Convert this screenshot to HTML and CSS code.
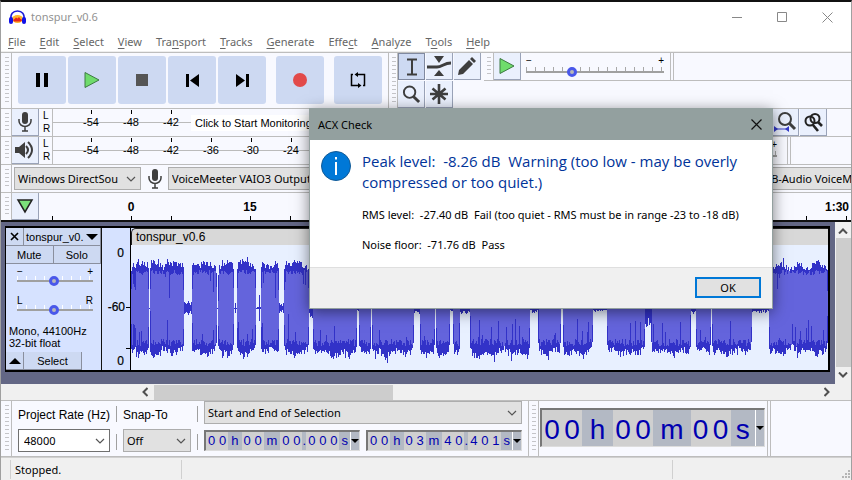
FILE: index.html
```
<!DOCTYPE html>
<html lang="en">
<head>
<meta charset="utf-8">
<title>tonspur_v0.6</title>
<link rel="stylesheet" href="styles.css">
</head>
<body>
<svg class="defs" aria-hidden="true">
  <symbol id="chevron" viewBox="0 0 10 6"><path d="M1 1l4 4 4-4" fill="none" stroke="#555" stroke-width="1.2"/></symbol>
  <symbol id="mic" viewBox="0 0 16 20"><rect x="5" y="0" width="6" height="12" rx="3" fill="#3e3e3e"/><path d="M2 7v2a6 5.500 0 0 0 12 0V7M8 14.500V19M5 19h6" fill="none" stroke="#3e3e3e" stroke-width="1.500"/></symbol>
  <symbol id="lens" viewBox="0 0 20 20"><circle cx="8" cy="7.500" r="6" fill="none" stroke="#3e3e3e" stroke-width="2"/><path d="M12 12l6 6" stroke="#3e3e3e" stroke-width="3"/></symbol>
  <symbol id="play" viewBox="0 0 16 18"><path d="M1 1.500v15L15 9z" fill="#6fdc6c" stroke="#3d7a42"/></symbol>
</svg>
<div class="window">
  <header class="titlebar">
    <svg class="logo" width="17" height="15" viewBox="0 0 17 15"><ellipse cx="8.500" cy="9" rx="5.500" ry="4" fill="#ffb52a"/><path d="M4 10l1.500-1 1.500-1.500 1.500 1 1.500-1.500 1.500 2 2 1-2 1.500H5z" fill="#e8261c"/><path d="M2 10C1 4 4 1 8.500 1S16 4 15 10" fill="none" stroke="#1b1bd8" stroke-width="1.500"/><rect x="0" y="7" width="4" height="7" rx="2" fill="#1111e8"/><rect x="13" y="7" width="4" height="7" rx="2" fill="#1111e8"/></svg>
    <h1>tonspur_v0.6</h1>
    <button class="caption" aria-label="Minimize"><svg width="11" height="11"><path d="M0 5.500h10" stroke="#888"/></svg></button>
    <button class="caption" aria-label="Maximize"><svg width="11" height="11"><path d="M.5.5h9v9h-9z" fill="none" stroke="#888"/></svg></button>
    <button class="caption" aria-label="Close"><svg width="11" height="11"><path d="M.5.5l10 10M10.500.5l-10 10" stroke="#888"/></svg></button>
  </header>
  <nav class="menu">
    <a href="#"><u>F</u>ile</a><a href="#"><u>E</u>dit</a><a href="#"><u>S</u>elect</a><a href="#"><u>V</u>iew</a><a href="#">Tra<u>n</u>sport</a><a href="#"><u>T</u>racks</a><a href="#"><u>G</u>enerate</a><a href="#">Effe<u>c</u>t</a><a href="#"><u>A</u>nalyze</a><a href="#">T<u>o</u>ols</a><a href="#"><u>H</u>elp</a>
  </nav>

  <section class="bar bar-top">
    <i class="grip"></i>
    <div class="transport">
      <button aria-label="Pause"><svg width="12" height="14"><path d="M0 0h4v14H0zM8 0h4v14H8z"/></svg></button>
      <button aria-label="Play"><svg width="16" height="18"><use href="#play"/></svg></button>
      <button aria-label="Stop"><svg width="12" height="12"><path d="M0 0h12v12H0z" fill="#555"/></svg></button>
      <button aria-label="Skip to Start"><svg width="13" height="13"><path d="M0 0h3v13H0zM13 0v13L4 6.500z"/></svg></button>
      <button aria-label="Skip to End"><svg width="13" height="13"><path d="M10 0h3v13h-3zM0 0v13l9-6.500z"/></svg></button>
      <button class="apart" aria-label="Record"><svg width="14" height="14"><circle cx="7" cy="7" r="7" fill="#e24a4a"/></svg></button>
      <button class="apart" aria-label="Loop"><svg width="16" height="16" viewBox="0 0 16 16"><path d="M3 2.500H1.500v11H9M7 2.500h7.500v11H13" fill="none" stroke="#000" stroke-width="1.500"/><path d="M8 0v5L4.500 2.500zM8 11v5l3.500-2.500z"/></svg></button>
    </div>
    <i class="grip framed"></i>
    <div class="tools">
      <button class="on" aria-label="Selection"><svg width="12" height="18"><path d="M1 1.500h10M1 16.500h10M6 2v14" stroke="#3e3e3e" stroke-width="2"/></svg></button>
      <button aria-label="Envelope"><svg width="24" height="20"><path d="M7 0h10l-5 7zM7 20h10l-5-6z" fill="#3e3e3e"/><path d="M0 11h10c5 0 7-4 14-4" fill="none" stroke="#3e3e3e" stroke-width="3"/></svg></button>
      <button aria-label="Draw"><svg width="18" height="18"><path d="M0 18l1-5L11 3l4 4L5 17zM12 2l2-2 4 4-2 2z" fill="#3e3e3e"/></svg></button>
      <button aria-label="Zoom"><svg width="19" height="19"><use href="#lens"/></svg></button>
      <button aria-label="Multi"><svg width="20" height="20"><path d="M10 0v20M1 10h18M3.500 4.500l13 11M16.500 4.500l-13 11" stroke="#3e3e3e" stroke-width="2.600"/></svg></button>
    </div>
    <div class="speed-dock">
      <div class="speed">
        <i class="grip"></i>
        <button class="tool" aria-label="Play at Speed"><svg width="16" height="18"><use href="#play"/></svg></button>
        <div class="slider wide"><span>−</span><span>+</span><input type="range" aria-label="Speed" value="32"></div>
        <i class="end"></i>
      </div>
    </div>
  </section>

  <section class="bar">
    <i class="grip"></i>
    <button class="tool" aria-label="Record meter"><svg width="16" height="20"><use href="#mic"/></svg></button>
    <div class="lr"><span>L</span><span>R</span></div>
    <div class="meter"><span>-54</span><span>-48</span><span>-42</span><button class="monitor">Click to Start Monitoring</button></div>
    <div class="zoomers">
      <button class="tool" aria-label="Fit Project"><svg width="23" height="21" viewBox="0 0 23 21"><circle cx="11" cy="7" r="6" fill="none" stroke="#3e3e3e" stroke-width="2"/><path d="M15 11l6 6" stroke="#3e3e3e" stroke-width="3"/><path d="M1 17h14" stroke="#3238c8"/><path d="M0 14l4 3-4 3zM15 14l-4 3 4 3z" fill="#3238c8"/></svg></button>
      <button class="tool" aria-label="Zoom Toggle"><svg width="19" height="19" viewBox="0 0 19 19"><circle cx="6" cy="8" r="4.500" fill="none" stroke="#222" stroke-width="2"/><circle cx="11" cy="5.500" r="4.500" fill="none" stroke="#222" stroke-width="2"/><path d="M9 12l5 6M14 9l4 4" stroke="#222" stroke-width="2.600"/></svg></button>
    </div>
  </section>

  <section class="bar">
    <i class="grip"></i>
    <button class="tool" aria-label="Playback meter"><svg width="20" height="18"><path d="M0 6h4l6-5v16l-6-5H0z" fill="#3e3e3e"/><path d="M11 5q4 4 0 8M13 1q8 8 0 16" fill="none" stroke="#3e3e3e" stroke-width="2"/></svg></button>
    <div class="lr"><span>L</span><span>R</span></div>
    <div class="meter"><span>-54</span><span>-48</span><span>-42</span><span>-36</span><span>-30</span><span>-24</span></div>
    <div class="slider volume"><span>−</span><span>+</span><input type="range" aria-label="Playback volume" value="50"></div>
    <i class="end last"></i>
  </section>

  <section class="bar devices">
    <i class="grip"></i>
    <label class="combo host"><select aria-label="Audio host"><option>Windows DirectSou</option></select><svg width="10" height="6"><use href="#chevron"/></svg></label>
    <svg class="device-icon" width="16" height="20"><use href="#mic"/></svg>
    <label class="combo input"><select aria-label="Recording device"><option>VoiceMeeter VAIO3 Output (VB-Audio VoiceMeeter VAIO3)</option></select></label>
    <label class="combo output"><select aria-label="Playback device"><option>VoiceMeeter Input (VB-Audio VoiceMeeter VAIO)</option></select></label>
  </section>

  <section class="bar timeline">
    <i class="grip"></i>
    <button class="tool" aria-label="Pinned play head"><svg width="18" height="16"><path d="M2 2h14L9 14z" fill="#7be07a" stroke="#222" stroke-width="1.500"/></svg></button>
    <svg class="ruler" height="27" id="ruler"></svg>
  </section>

  <main class="project">
    <div class="track">
      <div class="panel">
        <div class="row"><button class="x" aria-label="Close track"><svg width="9" height="9"><path d="M1 1l7 7M8 1L1 8" stroke="#000" stroke-width="1.600"/></svg></button><button class="name">tonspur_v0.<svg width="12" height="6"><path d="M0 0h12L6 6z"/></svg></button></div>
        <div class="row"><button class="half">Mute</button><button class="half">Solo</button></div>
        <div class="slider narrow"><span>−</span><span>+</span><input type="range" aria-label="Gain" value="49"></div>
        <div class="slider narrow pan"><span>L</span><span>R</span><input type="range" aria-label="Pan" value="49"></div>
        <p>Mono, 44100Hz<br>32-bit float</p>
        <div class="row foot"><button class="x" aria-label="Collapse"><svg width="12" height="6"><path d="M0 6h12L6 0z"/></svg></button><button class="select">Select</button></div>
      </div>
      <div class="vruler"><span>0</span><span class="mid">-60</span><span>0</span></div>
      <div class="clip"><h2>tonspur_v0.6</h2><svg id="wave" viewBox="0 0 698 125" preserveAspectRatio="none" shape-rendering="crispEdges"></svg></div>
    </div>
    <div class="vscroll"><svg width="10" height="6"><path d="M1 5.500l4-4 4 4" fill="none" stroke="#505050" stroke-width="2"/></svg><i></i><svg width="10" height="6"><path d="M1 .5l4 4 4-4" fill="none" stroke="#505050" stroke-width="2"/></svg></div>
  </main>
  <div class="hscroll"><svg width="6" height="10"><path d="M5.500 1l-4 4 4 4" fill="none" stroke="#505050" stroke-width="2"/></svg><div><i></i></div><svg width="6" height="10"><path d="M.5 1l4 4-4 4" fill="none" stroke="#505050" stroke-width="2"/></svg></div>

  <section class="bar selection">
    <i class="grip"></i>
    <div class="field rate"><label for="rate">Project Rate (Hz)</label><span class="combo white"><input id="rate" value="48000"><svg width="10" height="6"><use href="#chevron"/></svg></span></div>
    <i class="sep"></i>
    <div class="field snap"><label for="snap">Snap-To</label><span class="combo"><select id="snap"><option>Off</option></select><svg width="10" height="6"><use href="#chevron"/></svg></span></div>
    <i class="sep"></i>
    <div class="range">
      <label class="combo"><select aria-label="Selection mode"><option>Start and End of Selection</option></select><svg width="10" height="6"><use href="#chevron"/></svg></label>
      <div class="times">
        <div class="time"><b>0</b><b>0</b><em class="h">h</em><b>0</b><b>0</b><em class="m">m</em><b>0</b><b>0</b><s>.</s><b>0</b><b>0</b><b>0</b><em class="s">s</em><button aria-label="Format"><svg width="8" height="4"><path d="M0 0h8L4 4z"/></svg></button></div>
        <div class="time"><b>0</b><b>0</b><em class="h">h</em><b>0</b><b>3</b><em class="m">m</em><b>4</b><b>0</b><s>.</s><b>4</b><b>0</b><b>1</b><em class="s">s</em><button aria-label="Format"><svg width="8" height="4"><path d="M0 0h8L4 4z"/></svg></button></div>
      </div>
    </div>
    <i class="grip framed"></i>
    <div class="time big"><b>0</b><b>0</b><em class="h">h</em><b>0</b><b>0</b><em class="m">m</em><b>0</b><b>0</b><em class="s">s</em><button aria-label="Format"><svg width="8" height="4"><path d="M0 0h8L4 4z"/></svg></button></div>
    <i class="end"></i>
  </section>

  <footer class="status"><span class="message">Stopped.</span><span class="middle"></span><span class="right"></span><svg width="9" height="9"><path d="M6 0h2v2H6zM3 3h2v2H3zM6 3h2v2H6zM0 6h2v2H0zM3 6h2v2H3zM6 6h2v2H6z" fill="#b5b5b5"/></svg></footer>

  <div class="dialog" role="dialog" aria-labelledby="dlg">
    <div class="dialog-title"><h2 id="dlg">ACX Check</h2><button aria-label="Close dialog"><svg width="11" height="11"><path d="M.5.5l10 10M10.500.5l-10 10" stroke="#111" stroke-width="1.200"/></svg></button></div>
    <div class="dialog-body">
      <svg width="30" height="30"><circle cx="15" cy="15" r="14.500" fill="#0078d7" stroke="#125a96"/><path d="M15 6v2.500M15 11v13" stroke="#fff" stroke-width="2"/></svg>
      <div>
        <h3>Peak level:&nbsp; -8.26 dB&nbsp; Warning (too low - may be overly<br>compressed or too quiet.)</h3>
        <p>RMS level:&nbsp; -27.40 dB&nbsp; Fail (too quiet - RMS must be in range -23 to -18 dB)</p>
        <p>Noise floor:&nbsp; -71.76 dB&nbsp; Pass</p>
      </div>
    </div>
    <div class="dialog-foot"><button>OK</button></div>
  </div>
</div>
<script src="app.js"></script>
</body>
</html>
```
FILE: styles.css
```
* { box-sizing: border-box; }
body { margin: 0; font: 11px/16px "Noto Sans", "Open Sans", sans-serif; color: #000; background: #9a9a9a; }
h1, h2, h3, p { margin: 0; font: inherit; }
button, input, select { font: inherit; color: inherit; margin: 0; padding: 0; border: 0; background: none; border-radius: 0; }
svg { flex: none; display: block; }
.defs { position: absolute; width: 0; height: 0; }

.window { position: relative; display: flex; flex-direction: column; height: 100vh; border: 1px solid #a0a0a0; border-top: 2px solid #111; border-bottom: 0; background: #f0f0f0; overflow: hidden; }

.titlebar { display: flex; align-items: center; height: 30px; flex: none; padding-left: 8px; background: #fff; }
.titlebar h1 { flex: 1; margin-left: 5px; color: #929292; }
.caption { display: grid; place-items: center; width: 45px; height: 28px; }
.caption:last-child { margin-right: 1px; }
.menu { display: flex; gap: 14px; flex: none; height: 20px; padding: 0 7px; background: #fff; border-bottom: 1px solid #eee; line-height: 20px; }
.menu a { color: #666; text-decoration: none; }
.menu u { text-underline-offset: 2px; }

.bar { display: flex; flex: none; height: 28px; padding-left: 1px; border-top: 1px solid #bdbdbd; background: #f8f9ff; overflow: hidden; }
.grip { flex: none; width: 10px; border-right: 1px solid #bdbdbd; background: repeating-linear-gradient(#c4c4c8 0 1px, transparent 1px 4px) 3px 4px / 4px calc(100% - 8px) no-repeat; }
.grip.framed { border-left: 1px solid #bdbdbd; }
.end { flex: none; width: 4px; border: solid #bdbdbd; border-width: 0 1px; }
.tool, .tools button { display: grid; place-items: center; flex: none; width: 27px; height: 27px; background: #eaf0fd; border: solid #9aa3b8; border-width: 0 1px 1px 0; }

.bar-top { height: 56px; }
.transport { display: flex; gap: 2px; padding: 3px 6px 0 6px; }
.transport button { display: grid; place-items: center; width: 48px; height: 48px; border-radius: 3px; background: #cdd9f2; }
.transport .apart { margin-left: 8px; }
.tools { display: grid; grid-template-columns: repeat(3, 27px); gap: 1px; margin-right: 3px; }
.tools .on { background: #cdd9f2; border: 1px solid #8089a0; }
.speed-dock { flex: 1; }
.speed { display: flex; height: 28px; border-bottom: 1px solid #bdbdbd; }
.slider { display: grid; grid-template-columns: 1fr auto; grid-template-rows: 10px 12px; font: 10px/10px "Liberation Sans", sans-serif; background: repeating-linear-gradient(90deg, #a8a8a8 0 1px, transparent 1px 9px) 0 11px / 100% 4px no-repeat; }
.slider input { grid-column: 1 / 3; appearance: none; width: 100%; height: 12px; background: linear-gradient(#a0a0a0, #a0a0a0) 0 5px / 100% 2px no-repeat; }
.slider input::-webkit-slider-thumb { appearance: none; width: 10px; height: 10px; border-radius: 5px; border: 3px solid #4a58ea; background: #b8b8b8; }
.slider.wide { width: 138px; margin: 3px 6px 0 5px; }

.lr { display: flex; flex-direction: column; justify-content: space-around; width: 14px; padding-left: 4px; font: 10px/12px "Liberation Sans", sans-serif; border-right: 1px solid #bdbdbd; }
.meter { display: flex; align-items: center; flex: 1; padding-left: 18px; font: 11px/14px "Liberation Sans", sans-serif; background: linear-gradient(#bbb, #bbb) 0 13px / 100% 1px no-repeat; }
.meter span { width: 40px; height: 27px; text-align: center; line-height: 26px; background: linear-gradient(#000, #000) 20px 1px / 1px 4px no-repeat; }
.monitor { height: 16px; padding: 0 4px; background: #fff; }
.zoomers { display: flex; gap: 1px; margin-right: 24px; }
.volume { width: 110px; margin-top: 3px; margin-right: 10px; }
.end.last { margin-right: 60px; }

.combo { display: grid; align-items: center; height: 23px; border: 1px solid #adadad; background: #e1e1e1; }
.combo > * { grid-area: 1 / 1; min-width: 0; }
.combo select, .combo input { appearance: none; width: 100%; height: 21px; padding-left: 3px; outline: 0; }
.combo svg { justify-self: end; margin-right: 4px; pointer-events: none; }
.combo.white { background: #fff; border-color: #707070; }
.combo.white input { padding-left: 5px; }
.devices { align-items: center; }
.devices .grip { align-self: stretch; }
.host { width: 127px; margin-left: 2px; }
.device-icon { margin: 0 5px 0 6px; }
.input { width: 400px; }
.output { flex: 1; margin-left: 91px; margin-right: -20px; }
.output select { text-overflow: clip; }
.ruler { flex: 1; font: bold 12px "Liberation Sans", sans-serif; }

.project { display: flex; flex: 1; min-height: 0; border-top: 2px solid #111; background: #636785; }
.track { display: flex; flex: 1; margin: 4px 5px 12px 4px; border: 1px solid #000; border-width: 2px 2px 2px 1px; background: #d6e2ff; }
.panel { display: flex; flex-direction: column; width: 96px; border-right: 1px solid #111; font: 11px/12px "Liberation Sans", sans-serif; }
.row { display: flex; height: 18px; }
.row button { display: grid; place-items: center; background: #cdd9f2; border: 1px solid #8a8f9e; border-width: 0 1px 1px 0; }
.row .x { width: 18px; }
.row .name { display: flex; align-items: center; justify-content: space-between; flex: 1; padding: 0 2px; }
.row .half { flex: 1; }
.row .select { width: 58px; }
.panel .narrow { width: 76px; margin: 3px 0 0 11px; height: 24px; grid-template-rows: 8px 12px; background-image: repeating-linear-gradient(90deg, #fff 0 1px, transparent 1px 9px); background-position: 0 9px; }
.panel .pan { margin-top: 5px; }
.panel p { margin-top: 5px; padding-left: 3px; }
.panel .foot { margin-top: auto; }
.vruler { display: flex; flex-direction: column; justify-content: space-between; width: 29px; padding: 16px 6px 0 0; border-right: 1px solid #000; text-align: right; font: 12px/18px "Liberation Sans", sans-serif; background: repeating-linear-gradient(#000 0 1px, transparent 1px 41px) 24px 79px / 5px 100% no-repeat; -webkit-text-stroke: 0.200px #000; }
.vruler .mid { margin-right: -1px; }
.clip { display: flex; flex-direction: column; flex: 1; min-width: 0; }
.clip h2 { flex: none; height: 17px; padding-left: 4px; border: solid #222; border-width: 1px 0 0 1px; border-radius: 5px 0 0 0; background: #d8d8d8; font: 12px/16px "Liberation Sans", sans-serif; }
#wave { width: 100%; flex: 1; min-height: 0; background: #e8f0ff; }
.vscroll { display: flex; flex-direction: column; align-items: center; justify-content: space-between; width: 16px; padding: 6px 0; background: #f0f0f0; }
.vscroll i { width: 15px; flex: 1; margin: 4px 0 5px; background: #cdcdcd; }
.hscroll { display: flex; align-items: center; flex: none; height: 16px; padding: 0 21px 0 141px; gap: 6px; }
.hscroll div { flex: 1; height: 15px; }
.hscroll i { display: block; width: 36%; height: 15px; background: #cdcdcd; }

.selection { height: 57px; border-bottom: 1px solid #bdbdbd; }
.field { display: flex; flex-direction: column; padding-top: 4px; }
.field label { height: 24px; font: 12px/20px "Liberation Sans", sans-serif; white-space: nowrap; }
.rate { width: 92px; margin-left: 6px; }
.snap { width: 68px; }
.selection .sep { width: 1px; margin: 5px 6px; background: linear-gradient(#a0a0a0 0 16px, transparent 16px 28px, #a0a0a0 28px 44px, transparent 44px); }
.range { width: 318px; }
.times { display: flex; justify-content: space-between; margin-top: 6px; }
.time { display: flex; width: 156px; height: 21px; border: solid #777; border-width: 2px 1px 1px 2px; border-right-color: #ddd; border-bottom-color: #ddd; background: #b3b9c4; color: #0000b0; font: 13px/18px "Liberation Sans", sans-serif; text-align: center; }
.time > * { font: inherit; text-decoration: none; }
.time b { width: 11px; background: #d0d0d0; }
.time .h { flex: 14 0 0; }
.time .m { flex: 17 0 0; }
.time .s { flex: 11 0 0; }
.time s { width: 4px; }
.time button { display: grid; place-items: center; width: 9px; border-left: 1px solid #fff; color: #000; }
.selection > .framed { margin-left: 6px; width: 11px; }
.time.big { width: 225px; height: 39px; margin: 7px 2px 0 1px; font-size: 28px; line-height: 40px; }
.time.big b { width: 20px; }

.status { display: flex; flex: none; height: 23px; padding: 2px 0 1px 9px; border-top: 1px solid #d0d0d0; line-height: 20px; }
.status span { border-left: 1px solid #d0d0d0; padding-left: 4px; }
.message { width: 171px; }
.middle { flex: 1; }
.right { width: 170px; }
.status svg { align-self: end; }

.dialog { position: absolute; left: 50%; top: 106px; width: 464px; margin-left: -117px; border: 1px solid #93a09f; background: #fff; box-shadow: 0 3px 14px rgba(0, 0, 0, 0.5); }
.dialog-title { display: flex; align-items: center; justify-content: space-between; height: 31px; padding: 0 10px 0 8px; background: #93a09f; }
.dialog-body { display: flex; gap: 11px; height: 127px; padding: 11px; }
.dialog h3 { font-family: "Open Sans", "Noto Sans", sans-serif; font-size: 15px; line-height: 21px; color: #003399; white-space: nowrap; }
.dialog p { margin-top: 14px; white-space: nowrap; }
.dialog-foot { display: flex; justify-content: flex-end; height: 41px; padding: 9px 11px; border-top: 1px solid #dfdfdf; background: #f0f0f0; }
.dialog-foot button { width: 66px; height: 21px; border: 2px solid #0078d7; background: #e1e1e1; }
```
FILE: app.js
```
// Clip envelope: [first column, last column, loudness], in pixels of the wave view
const segments = [
  [0, 3, 44], [4, 17, 45], [19, 52, 45], [61, 85, 45], [87, 102, 45], [106, 124, 45], [130, 147, 45],
  [153, 177, 45], [182, 225, 45], [228, 239, 45], [241, 282, 45], [289, 303, 45], [305, 318, 45],
  [322, 328, 45], [339, 399, 45], [408, 430, 45], [433, 462, 45], [477, 514, 44], [521, 560, 44],
  [566, 580, 44], [582, 621, 44], [639, 697, 43]
];
const tails = [[53, 60, 7], [104, 104, 10], [125, 129, 1], [128, 128, 19], [148, 152, 5], [178, 181, 10], [226, 227, 4], [283, 288, 6], [319, 321, 5], [329, 338, 6], [400, 407, 5], [463, 476, 4], [515, 520, 20], [561, 565, 6], [622, 638, 5]];
let seed = 11;
function rnd() {
  seed = (seed * 1103515245 + 12345) % 2147483648;
  return seed / 2147483648;
}
const mid = 63;
let outer = "M0 63h698v1H0z";
let inner = "";
for (const [a, b, loud] of segments) {
  for (let x = a; x <= b; x++) {
    const edge = Math.min(x - a, b - x) === 0 ? 5 : 0;
    const peak = rnd() > 0.95 ? 4 : 0;
    const swell = Math.sin(x * 0.35) * 2 + Math.sin(x * 0.13) * 1.5;
    const up = Math.round(loud - 1 - edge + rnd() * 6 - 3 + swell + peak);
    const down = Math.round(loud - 1 - edge + rnd() * 7 - 3 + swell + peak);
    outer += `M${x} ${mid - up}h1v${up + down}h-1z`;
    const dipUp = rnd() > 0.91 ? rnd() * 26 : 0;
    const dipDown = rnd() > 0.88 ? rnd() * 26 : 0;
    const cut = edge ? 16 : 0;
    const iu = Math.round(38 - cut - rnd() * 5 - dipUp);
    const id = Math.round(38 - cut - rnd() * 7 - dipDown);
    inner += `M${x} ${mid - iu}h1v${iu + id}h-1z`;
  }
}
for (const [a, b, loud] of tails) {
  for (let x = a; x <= b; x++) {
    const h = Math.round(loud * (0.4 + rnd() * 0.6));
    outer += `M${x} ${mid - h}h1v${2 * h}h-1z`;
  }
}
document.getElementById("wave").innerHTML =
  `<path d="${outer}" fill="#3232c8"/><path d="${inner}" fill="#6464dc"/>`;

// Time ruler: offsets from its left edge
let ruler = "";
for (const x of [13, 92, 132, 211, 251, 767, 807]) ruler += `<path d="M${x}.5 23v4" stroke="#000"/>`;
for (const [x, t] of [[92, "0"], [211, "15"], [798, "1:30"]]) ruler += `<text x="${x}" y="18" text-anchor="middle">${t}</text>`;
document.getElementById("ruler").innerHTML = ruler;
```
